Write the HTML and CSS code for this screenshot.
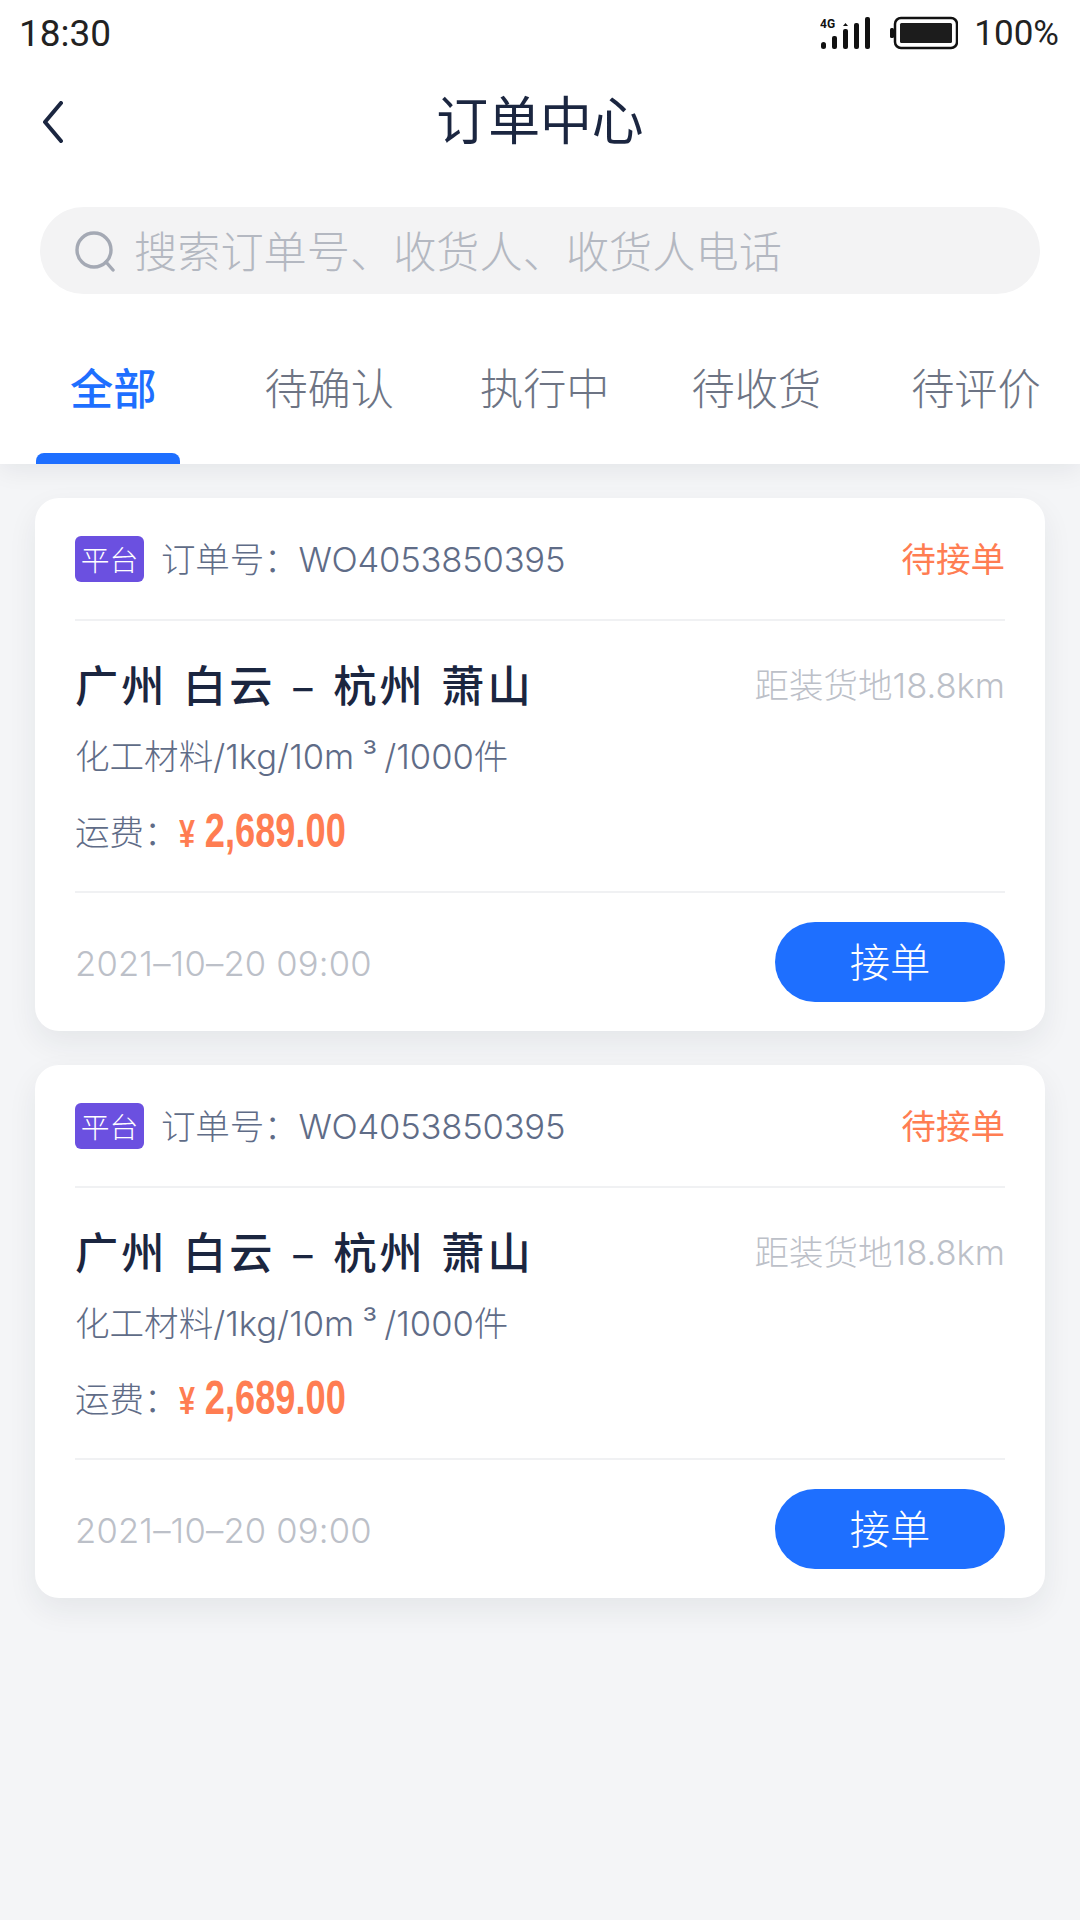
FILE: index.html
```html
<!DOCTYPE html>
<html lang="zh-CN">
<head>
    <meta charset="UTF-8">
    <meta name="viewport" content="width=device-width, initial-scale=1.0">
    <title>订单中心</title>
    <link rel="stylesheet" href="styles.css">
</head>
<body>
    <div class="top">
        <div class="status-bar">
            <span class="time">18:30</span>
            <div class="status-right">
                <svg class="signal" width="52" height="34" viewBox="0 0 52 34">
                    <text x="0" y="12" class="signal-label">4G</text>
                    <path d="M25.5 7l-2.5 3h5z" fill="#111"/>
                    <rect x="1" y="26" width="5" height="7" rx="2.5" fill="#111"/>
                    <rect x="12" y="20" width="5" height="13" rx="2" fill="#111"/>
                    <rect x="23" y="13" width="5" height="20" rx="2" fill="#111"/>
                    <rect x="34" y="7" width="5" height="26" rx="2" fill="#111"/>
                    <rect x="45" y="1" width="5" height="32" rx="2" fill="#111"/>
                </svg>
                <svg class="battery" width="68" height="34" viewBox="0 0 68 34">
                    <rect x="0" y="12" width="4" height="10" rx="1.5" fill="#111"/>
                    <rect x="5" y="2" width="62" height="30" rx="6" fill="none" stroke="#111" stroke-width="2.5"/>
                    <rect x="10" y="7" width="52" height="20" rx="1.5" fill="#1c1c1c"/>
                </svg>
                <span class="percent">100%</span>
            </div>
        </div>

        <div class="nav-bar">
            <svg class="back" width="22" height="42" viewBox="0 0 22 42">
                <path d="M19 2L3 21l16 19" fill="none" stroke="#1b2640" stroke-width="4" stroke-linecap="round" stroke-linejoin="round"/>
            </svg>
            <h1 class="title">订单中心</h1>
        </div>

        <div class="search-wrap">
            <div class="search">
                <svg width="42" height="42" viewBox="0 0 42 42">
                    <circle cx="20" cy="20" r="17" fill="none" stroke="#a4a9b4" stroke-width="3.4"/>
                    <path d="M32 32l7 8" fill="none" stroke="#a4a9b4" stroke-width="3.4" stroke-linecap="round"/>
                </svg>
                <span class="placeholder">搜索订单号、收货人、收货人电话</span>
            </div>
        </div>

        <div class="tabs">
            <div class="tab active">全部</div>
            <div class="tab">待确认</div>
            <div class="tab">执行中</div>
            <div class="tab">待收货</div>
            <div class="tab">待评价</div>
        </div>
    </div>

    <div class="list">
        <div class="card">
            <div class="card-head">
                <span class="badge">平台</span>
                <span class="order-no">订单号：WO4053850395</span>
                <span class="state">待接单</span>
            </div>
            <div class="card-body">
                <div class="route-row">
                    <span class="route">广州 白云 – 杭州 萧山</span>
                    <span class="distance">距装货地18.8km</span>
                </div>
                <div class="goods">化工材料/1kg/10m<span class="cube">³</span>/1000件</div>
                <div class="fee">
                    <span class="fee-label">运费：</span>
                    <span class="price"><span class="yen">¥</span>2,689.00</span>
                </div>
            </div>
            <div class="card-foot">
                <span class="date">2021–10–20 09:00</span>
                <button class="accept">接单</button>
            </div>
        </div>

        <div class="card">
            <div class="card-head">
                <span class="badge">平台</span>
                <span class="order-no">订单号：WO4053850395</span>
                <span class="state">待接单</span>
            </div>
            <div class="card-body">
                <div class="route-row">
                    <span class="route">广州 白云 – 杭州 萧山</span>
                    <span class="distance">距装货地18.8km</span>
                </div>
                <div class="goods">化工材料/1kg/10m<span class="cube">³</span>/1000件</div>
                <div class="fee">
                    <span class="fee-label">运费：</span>
                    <span class="price"><span class="yen">¥</span>2,689.00</span>
                </div>
            </div>
            <div class="card-foot">
                <span class="date">2021–10–20 09:00</span>
                <button class="accept">接单</button>
            </div>
        </div>
    </div>
</body>
</html>
```

FILE: styles.css
```css
* {
    box-sizing: border-box;
}

html, body {
    height: 100%;
}

body {
    margin: 0;
    background-color: #f4f5f7;
    font-family: Inter, "Noto Sans CJK SC", sans-serif;
    color: #1b2640;
}

.top {
    position: relative;
    z-index: 1;
    height: 464px;
    background-color: #fff;
    box-shadow: 0 6px 24px rgba(20, 25, 40, 0.07);
}

.status-bar {
    height: 66px;
    padding: 0 21px 0 19px;
    display: flex;
    align-items: center;
    justify-content: space-between;
    color: #222;
    font-size: 35px;
    font-family: Roboto, sans-serif;
}

.time {
    font-size: 37px;
}

.status-right {
    display: flex;
    align-items: center;
}

.signal-label {
    font-family: Roboto, sans-serif;
    font-size: 12px;
    font-weight: 700;
    fill: #111;
}

.battery {
    margin-left: 18px;
}

.percent {
    margin-left: 16px;
}

.nav-bar {
    height: 112px;
    padding-left: 42px;
    display: flex;
    align-items: center;
    position: relative;
}

.title {
    position: absolute;
    left: 0;
    right: 0;
    top: -4px;
    margin: 0;
    text-align: center;
    font-size: 51.84px;
    line-height: 112px;
    font-weight: 400;
    font-family: "Noto Sans CJK SC", sans-serif;
}

.search-wrap {
    padding: 29px 40px 0;
}

.search {
    height: 87px;
    border-radius: 44px;
    background-color: #f3f3f4;
    padding-left: 34px;
    display: flex;
    align-items: center;
}

.placeholder {
    margin-left: 18px;
    margin-top: -4px;
    font-size: 43.2px;
    color: #b4b8c1;
    font-family: "Noto Sans CJK SC", sans-serif;
    font-weight: 300;
}

.tabs {
    display: flex;
    padding: 60px 0 0 70px;
    height: 170px;
}

.tab {
    font-size: 43.2px;
    line-height: 64px;
    color: #6d7484;
    font-family: "Noto Sans CJK SC", sans-serif;
    font-weight: 300;
    position: relative;
}

.tab:nth-child(2) { margin-left: 108px; }
.tab:nth-child(3) { margin-left: 86px; }
.tab:nth-child(4) { margin-left: 82px; }
.tab:nth-child(5) { margin-left: 90px; }

.tab.active {
    color: #1e6fff;
    font-weight: 500;
}

.tab.active::after {
    content: "";
    position: absolute;
    left: -34px;
    bottom: 0;
    width: 144px;
    height: 11px;
    border-radius: 8px 8px 0 0;
    background-color: #1e6fff;
}

.list {
    padding: 34px 35px 0;
}

.card {
    background-color: #fff;
    border-radius: 24px;
    padding: 0 40px;
    margin-bottom: 34px;
    box-shadow: 0 12px 30px rgba(30, 40, 60, 0.07);
}

.card-head {
    height: 123px;
    display: flex;
    align-items: center;
    border-bottom: 2px solid #f0f1f3;
}

.badge {
    width: 69px;
    height: 46px;
    border-radius: 6px;
    background-color: #6b50e0;
    color: #fff;
    font-size: 28.8px;
    font-family: "Noto Sans CJK SC", sans-serif;
    font-weight: 300;
    display: flex;
    align-items: center;
    justify-content: center;
}

.order-no {
    margin-left: 17px;
    margin-top: -4px;
    font-size: 34.56px;
    letter-spacing: -0.2px;
    color: #5f6c87;
    font-weight: 300;
}

.state {
    margin-left: auto;
    margin-top: -4px;
    font-size: 34.56px;
    color: #ff7d52;
}

.card-body {
    height: 272px;
    padding-top: 37px;
    border-bottom: 2px solid #f0f1f3;
}

.route-row {
    height: 50px;
    display: flex;
    align-items: center;
    justify-content: space-between;
}

.route {
    font-size: 43.2px;
    font-weight: 500;
    letter-spacing: 3px;
    word-spacing: 3px;
    font-family: "Noto Sans CJK SC", sans-serif;
}

.distance {
    font-size: 34.56px;
    font-weight: 300;
    color: #bcc0c8;
}

.goods {
    height: 50px;
    line-height: 50px;
    margin-top: 24px;
    font-size: 34.56px;
    font-weight: 300;
    color: #5f6c87;
}

.cube {
    margin: 0 7px 0 8px;
}

.fee {
    height: 50px;
    margin-top: 23px;
    display: flex;
    align-items: center;
}

.fee-label {
    font-size: 34.56px;
    font-weight: 300;
    color: #5f6c87;
}

.price {
    font-family: "Liberation Sans", sans-serif;
    font-weight: 700;
    font-size: 48px;
    color: #ff7d52;
    transform: scaleX(0.755);
    transform-origin: left center;
}

.yen {
    font-size: 38px;
    margin-right: 13px;
}

.card-foot {
    height: 138px;
    display: flex;
    align-items: center;
    justify-content: space-between;
}

.date {
    font-size: 34.56px;
    letter-spacing: 0.2px;
    margin-top: 2px;
    font-weight: 300;
    color: #bcc0c8;
}

.accept {
    width: 230px;
    height: 80px;
    padding: 0 0 6px;
    border: none;
    border-radius: 40px;
    background-color: #1e6fff;
    color: #fff;
    font-size: 40.32px;
    font-family: "Noto Sans CJK SC", sans-serif;
    font-weight: 300;
}
```
